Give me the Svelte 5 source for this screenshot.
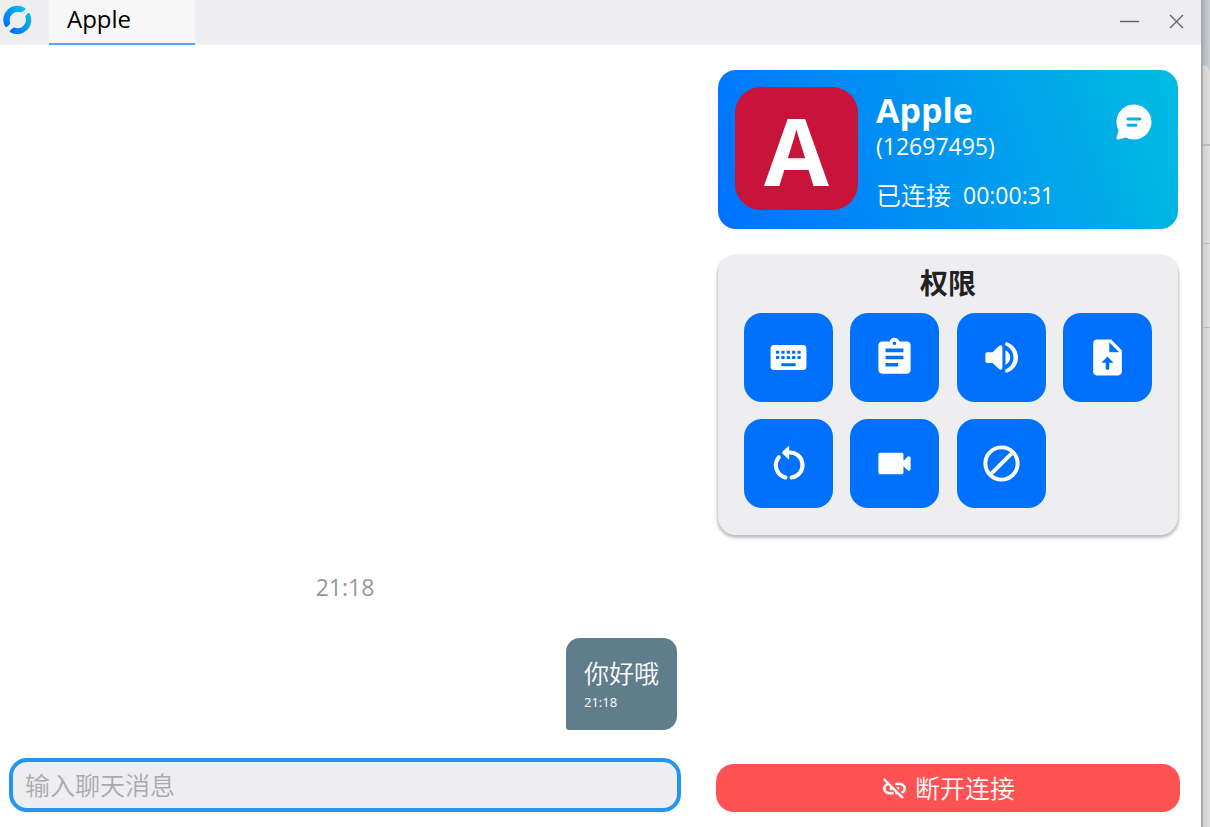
<script lang="ts">
  type Message = { text: string; time: string };
  type Permission = { key: string; label: string; enabled: boolean };

  const peer = { name: 'Apple', id: '12697495', elapsed: '00:00:31' };

  let draft = $state('');
  let messages = $state<Message[]>([{ text: '你好哦', time: '21:18' }]);
  let permissions = $state<Permission[]>([
    { key: 'keyboard', label: '键盘鼠标', enabled: true },
    { key: 'clipboard', label: '剪贴板', enabled: true },
    { key: 'audio', label: '音频', enabled: true },
    { key: 'file', label: '文件', enabled: true },
    { key: 'restart', label: '重启', enabled: true },
    { key: 'recording', label: '录屏', enabled: true },
    { key: 'block', label: '阻止用户输入', enabled: true },
  ]);

  function send(e: SubmitEvent) {
    e.preventDefault();
    const text = draft.trim();
    if (!text) return;
    messages.push({ text, time: new Date().toTimeString().slice(0, 5) });
    draft = '';
  }
</script>

<div class="desktop">
  <div class="window">
    <header class="titlebar">
      <svg class="logo" viewBox="0 0 30 30" aria-hidden="true">
        <defs>
          <linearGradient id="logo-fill" x1="0" y1="1" x2="1" y2="0">
            <stop offset="0.1" stop-color="#0071ff" />
            <stop offset="0.9" stop-color="#00bde1" />
          </linearGradient>
        </defs>
        <g fill="url(#logo-fill)">
          <path d="M21.600 2.700A14 14 0 0 0 1.600 20.500Q2.500 23 4.500 21.500L6.800 19.200Q7.500 18.400 7 17.400A8.300 8.300 0 0 1 17.600 7.200Q18.600 7.500 19.400 6.800L22.100 4.700Q23.200 3.500 21.600 2.700Z" />
          <path d="M26.800 8.800A14 14 0 0 1 7.700 27.400Q6 26.400 7.300 25.200L9.800 23Q10.600 22.200 11.600 22.600A8.300 8.300 0 0 0 22.500 12.300Q22.100 11.200 22.900 10.400L24.900 8.200Q26 7.200 26.800 8.800Z" />
        </g>
      </svg>
      <button class="tab" type="button">{peer.name}</button>
      <div class="window-actions">
        <button type="button" aria-label="最小化">
          <svg viewBox="0 0 20 20"><path d="M0 9.500h19" stroke-width="1.5" /></svg>
        </button>
        <button type="button" aria-label="关闭">
          <svg viewBox="0 0 20 20"><path d="M3 3l13 13M16 3l-13 13" stroke-width="1.4" /></svg>
        </button>
      </div>
    </header>

    <main class="content">
      <section class="chat">
        <div class="messages">
          <time class="day">21:18</time>
          {#each messages as message}
            <div class="bubble">
              <p>{message.text}</p>
              <time>{message.time}</time>
            </div>
          {/each}
        </div>
        <form onsubmit={send}>
          <input type="text" aria-label="输入聊天消息" placeholder="输入聊天消息" bind:value={draft} />
        </form>
      </section>

      <aside class="side">
        <section class="peer">
          <div class="avatar">{peer.name[0]}</div>
          <div class="peer-info">
            <h1>{peer.name}</h1>
            <p class="peer-id">({peer.id})</p>
            <p class="status"><span>已连接</span><span>{peer.elapsed}</span></p>
          </div>
          <button class="chat-toggle" type="button" aria-label="聊天">
            <svg viewBox="0 0 36 36">
              <path fill="#fff" d="M18 .5a17.500 17.500 0 1 1-8.200 33L2.400 35.400Q.3 35.700.6 33.600L2.600 26.400A17.500 17.500 0 0 1 18 .5Z" />
              <path stroke="#00b3e6" stroke-width="2.9" stroke-linecap="round" d="M12 15h12M12 21.200h8" />
            </svg>
          </button>
        </section>

        <section class="permissions">
          <h2>权限</h2>
          <div class="grid">
            {#each permissions as item (item.key)}
              <button
                type="button"
                class:off={!item.enabled}
                aria-label={item.label}
                aria-pressed={item.enabled}
                onclick={() => (item.enabled = !item.enabled)}
              >
                <svg viewBox="0 0 24 24">
                  {#if item.key === 'keyboard'}
                    <path fill-rule="evenodd" d="M20 5H4Q2 5 2 7V17Q2 19 4 19H20Q22 19 22 17V7Q22 5 20 5ZM5 8.200h1.800v1.700H5zM8 8.200h1.800v1.700H8zM11 8.200h1.800v1.700h-1.800zM14 8.200h1.800v1.700h-1.800zM17 8.200h1.800v1.700h-1.800zM5 11.200h1.800v1.700H5zM8 11.200h1.800v1.700H8zM11 11.200h1.800v1.700h-1.800zM14 11.200h1.800v1.700h-1.800zM17 11.200h1.800v1.700h-1.800zM8 15.200h8v1.700H8z" />
                  {:else if item.key === 'clipboard'}
                    <path d="M19 3h-4.180C14.400 1.840 13.300 1 12 1c-1.300 0-2.400.84-2.820 2H5c-1.100 0-2 .9-2 2v14c0 1.100.9 2 2 2h14c1.100 0 2-.9 2-2V5c0-1.100-.9-2-2-2zm-7 0c.55 0 1 .45 1 1s-.45 1-1 1-1-.45-1-1 .45-1 1-1zm2 14H7v-2h7v2zm3-4H7v-2h10v2zm0-4H7V7h10v2z" />
                  {:else if item.key === 'audio'}
                    <path d="M3 10v4c0 .55.45 1 1 1h3l3.800 3.500c.63.63 1.710.18 1.710-.71V6.210c0-.89-1.080-1.340-1.710-.71L7 9H4c-.55 0-1 .45-1 1zM16.900 12c0-1.770-1.020-3.290-2.700-4.030v8.050c1.680-.73 2.700-2.250 2.700-4.020zM14 4.450v.2c0 .38.25.71.6.85C16.980 6.630 18.700 9.060 18.700 12s-1.720 5.370-4.100 6.500c-.36.14-.6.47-.6.85v.2c0 .63.63 1.070 1.210.85C18.800 19.110 21.200 15.840 21.200 12s-2.400-7.110-5.990-8.400c-.58-.23-1.210.22-1.210.85z" />
                  {:else if item.key === 'file'}
                    <path fill-rule="evenodd" d="M14 2H6c-1.100 0-2 .9-2 2v16c0 1.100.9 2 2 2h12c1.100 0 2-.9 2-2V8l-6-6zM13 3.500L18.500 9H13zM12 11.500l3.400 3.400H13V18q0 1-1 1t-1-1v-3.100H8.600z" />
                  {:else if item.key === 'restart'}
                    <path d="M11.800 2.400Q12.400 2 12.400 2.800v6.400Q12.400 10 11.800 9.500L8.600 6.400Q8.200 6 8.600 5.500z" />
                    <path class="line" stroke-width="2.3" stroke-linecap="round" d="M12 5.900a7 7 0 0 1 1.700 13.900M10.300 19.800A7 7 0 0 1 6.600 8.500" />
                  {:else if item.key === 'recording'}
                    <path d="M17 10.500V7c0-.55-.45-1-1-1H4c-.55 0-1 .45-1 1v10c0 .55.45 1 1 1h12c.55 0 1-.45 1-1v-3.500l2.290 2.290c.63.63 1.710.18 1.710-.71V8.910c0-.89-1.080-1.340-1.710-.71L17 10.500z" />
                  {:else}
                    <path class="line" stroke-width="2.200" d="M12 3a9 9 0 1 0 0 18a9 9 0 1 0 0-18zM18.400 5.600L5.600 18.400" />
                  {/if}
                </svg>
              </button>
            {/each}
          </div>
        </section>

        <button class="disconnect" type="button">
          <svg viewBox="0 0 24 24" aria-hidden="true">
            <path stroke="#fff" stroke-width="0.4" d="M17 7h-4v1.900h4c1.710 0 3.100 1.390 3.100 3.100 0 1.430-.98 2.630-2.310 2.980l1.460 1.460C20.880 15.610 22 13.950 22 12c0-2.760-2.240-5-5-5zm-1 4h-2.190l2 2H16v-2zM2 4.270l3.110 3.110C3.290 8.120 2 9.910 2 12c0 2.760 2.240 5 5 5h4v-1.900H7c-1.710 0-3.100-1.390-3.100-3.100 0-1.590 1.210-2.900 2.760-3.070L8.730 11H8v2h2.730L13 15.270V17h1.730l4.010 4L20 19.740 3.270 3 2 4.270z" />
          </svg>
          断开连接
        </button>
      </aside>
    </main>
  </div>

  <div class="behind" aria-hidden="true">
    <div class="behind-panel">
      <i></i><i></i><i></i>
    </div>
  </div>
</div>

<style>
  :global(body) {
    background: #fff;
  }
  .desktop {
    display: flex;
    min-height: 100vh;
    font-family: 'Open Sans', 'Noto Sans', 'Noto Sans CJK SC', sans-serif;
    font-size: 23px;
    line-height: 32px;
    color: #111;
  }
  .desktop * {
    box-sizing: border-box;
  }
  button,
  input {
    font: inherit;
  }
  button {
    padding: 0;
    border: 0;
    background: none;
    cursor: pointer;
  }
  h1,
  h2,
  p {
    margin: 0;
  }
  svg {
    display: block;
  }

  .window {
    flex: 1;
    display: flex;
    flex-direction: column;
    background: #fff;
  }
  .titlebar {
    display: flex;
    height: 45px;
    background: #eeeef1;
    border-bottom: 1px solid #f7f7f8;
  }
  .logo {
    width: 30px;
    height: 30px;
    margin: 5px 16px 0 3px;
  }
  .tab {
    width: 146px;
    height: 45px;
    padding: 0 18px 6px;
    border-bottom: 2px solid #5ba2fc;
    background: #f7f7f7;
    color: #000;
    font-size: 24px;
    text-align: left;
  }
  .window-actions {
    display: flex;
    gap: 27px;
    align-items: center;
    margin-left: auto;
    padding-right: 14px;
  }
  .window-actions svg {
    width: 20px;
    height: 20px;
    stroke: #666;
  }

  .content {
    flex: 1;
    display: flex;
    gap: 35px;
    padding: 25px 21px 15px 9px;
  }
  .chat {
    flex: 1;
    display: flex;
    flex-direction: column;
    justify-content: flex-end;
  }
  .messages {
    display: flex;
    flex-direction: column;
    align-items: flex-end;
    gap: 4px;
    padding-bottom: 28px;
  }
  .day {
    align-self: center;
    margin-bottom: 31px;
    color: #999;
  }
  .bubble {
    margin-right: 4px;
    padding: 17px 18px 16px;
    border-radius: 14px 14px 14px 3px;
    background: #607d8b;
    color: #fff;
  }
  .bubble p {
    font-size: 25px;
    font-weight: 350;
    line-height: 36px;
  }
  .bubble time {
    display: block;
    font-size: 13px;
    line-height: 23px;
  }
  input {
    display: block;
    width: 100%;
    height: 54px;
    padding: 0 12px;
    border: 4px solid #2196f3;
    border-radius: 18px;
    outline: none;
    background: #eeeef1;
    color: #111;
    font-size: 25px;
    font-weight: 350;
  }
  input::placeholder {
    color: #aaa;
    opacity: 1;
  }

  .side {
    display: flex;
    flex-direction: column;
    width: 464px;
  }
  .peer {
    display: flex;
    gap: 18px;
    height: 159px;
    margin: 0 2px;
    padding: 17px;
    border-radius: 18px;
    background: linear-gradient(71deg, #0071ff 0%, #00bde1 100%);
    color: #fff;
  }
  .avatar {
    width: 123px;
    height: 123px;
    border-radius: 26px;
    background: #c8143a;
    font-size: 94px;
    font-weight: 700;
    line-height: 126px;
    text-align: center;
  }
  h1 {
    padding-top: 4px;
    font-size: 34px;
    font-weight: 700;
    line-height: 38px;
  }
  .peer-id {
    line-height: 34px;
  }
  .status {
    display: flex;
    gap: 12px;
    padding-top: 16px;
  }
  .status span:first-child {
    font-size: 25px;
    font-weight: 350;
  }
  .chat-toggle {
    align-self: flex-start;
    margin: 17px 9px 0 auto;
  }
  .chat-toggle svg {
    width: 36px;
    height: 36px;
  }

  .permissions {
    margin: 26px 2px 0;
    padding: 10px 26px 27px;
    border-radius: 18px;
    background: #eeeef1;
    box-shadow: 0 2px 3px 1px rgba(0, 0, 0, 0.26);
  }
  h2 {
    margin-bottom: 12px;
    color: #222;
    font-size: 28px;
    font-weight: 700;
    line-height: 36px;
    text-align: center;
  }
  .grid {
    display: grid;
    grid-template-columns: repeat(4, 89px);
    justify-content: space-between;
    gap: 17px;
  }
  .grid button {
    display: flex;
    align-items: center;
    justify-content: center;
    height: 89px;
    border-radius: 18px;
    background: #0071ff;
  }
  .grid button.off {
    background: #9e9e9e;
  }
  .grid svg {
    width: 43px;
    height: 43px;
    fill: #fff;
  }
  .grid .line {
    fill: none;
    stroke: #fff;
  }

  .disconnect {
    display: flex;
    align-items: center;
    justify-content: center;
    gap: 7px;
    height: 48px;
    margin-top: auto;
    border-radius: 18px;
    background: #ff5252;
    color: #fff;
    font-size: 25px;
    font-weight: 350;
  }
  .disconnect svg {
    width: 27px;
    height: 27px;
    fill: #fff;
  }

  .behind {
    display: flex;
    width: 9px;
    padding-top: 65px;
    border-left: 2px solid #a9a9a9;
    background: linear-gradient(90deg, #b0b4bc, #c9cfda);
  }
  .behind-panel {
    flex: 1;
    border-top-right-radius: 7px;
    background: linear-gradient(90deg, #d0d0d0, #dfdfdf);
  }
  .behind i {
    display: block;
    height: 84px;
    border-bottom: 1px solid #bcbcbc;
  }
  .behind i:first-child {
    height: 81px;
    border-bottom-width: 2px;
  }
  .behind i:nth-child(2) {
    height: 98px;
  }
</style>
